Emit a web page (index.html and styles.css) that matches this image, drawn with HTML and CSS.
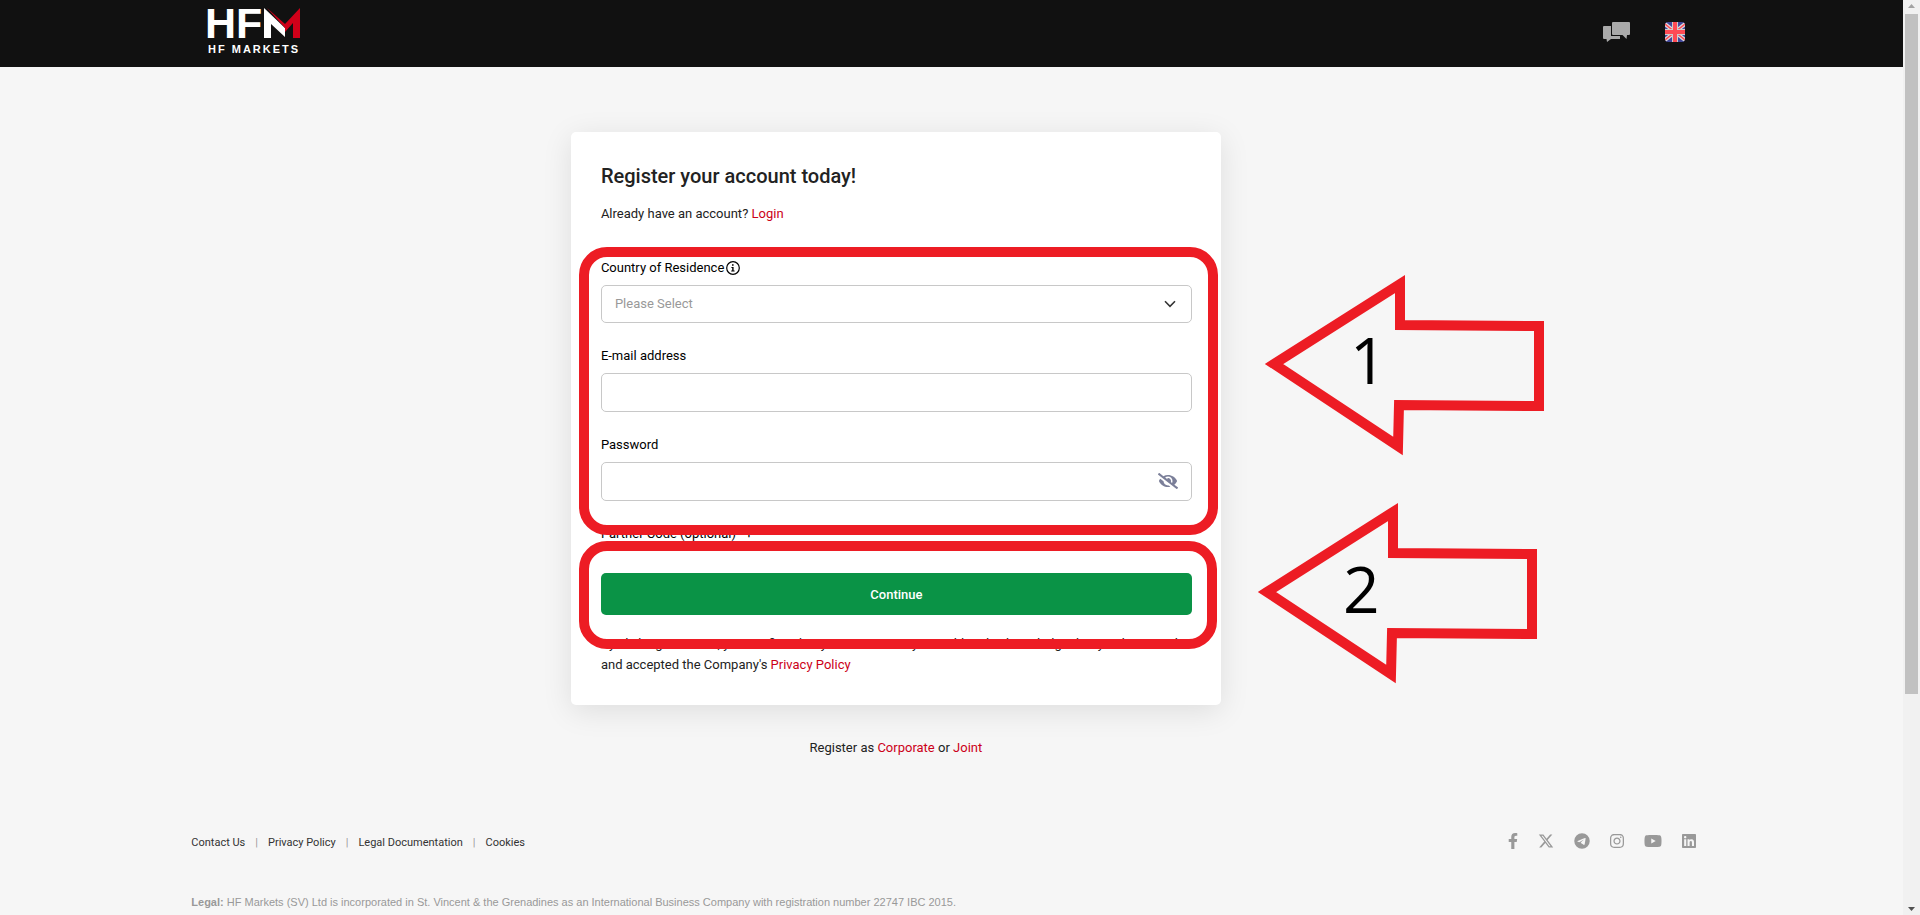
FILE: index.html
```html
<!DOCTYPE html>
<html lang="en">
<head>
  <meta charset="utf-8">
  <title>HFM - Register your account</title>
  <link rel="stylesheet" href="styles.css">
</head>
<body>
  <div class="page">
    <header class="header">
      <div class="container header-row">
        <a href="#" class="logo" aria-label="HFM">
          <svg width="100" height="50" viewBox="0 0 100 50">
            <text class="logo-name" x="14" y="35">HF</text>
            <path fill="#fff" d="M73 5l21 20v9L80 21v14h-7z"/>
            <path fill="#d00019" d="M76 5l18 16 15-16v30h-7V20l-8 9v-4z"/>
            <text class="logo-sub" x="17" y="50">HF MARKETS</text>
          </svg>
        </a>
        <div class="header-tools">
          <button type="button" class="tool" aria-label="Live chat">
            <svg width="28" height="20" viewBox="0 0 28 20">
              <path fill="#aaa" d="M1 4h7v10h9v3H8l-4 3-.5-3H1q-1 0-1-1V5q0-1 1-1z"/>
              <path fill="#aaa" d="M10 0h16q1 0 1 1v11q0 1-1 1h-2l-.5 4-4-4H10q-1 0-1-1V1q0-1 1-1z"/>
            </svg>
          </button>
          <button type="button" class="tool" aria-label="English">
            <svg class="flag" width="20" height="20" viewBox="0 0 20 20">
              <path fill="#41479b" d="M0 0h20v20H0z"/>
              <path stroke="#ddd" stroke-width="4" d="M0 2l20 16M0 18L20 2"/>
              <path stroke="#ff4b55" stroke-width="1.5" d="M0 2l20 16M0 18L20 2"/>
              <path stroke="#ccc" stroke-width="6" d="M10 0v20M0 10h20"/>
              <path stroke="#ff4b55" stroke-width="4" d="M10 0v20M0 10h20"/>
            </svg>
          </button>
        </div>
      </div>
    </header>

    <main class="main">
      <form class="card">
        <h1>Register your account today!</h1>
        <p class="login">Already have an account? <a href="#">Login</a></p>

        <div class="step step-fields">
          <div class="field">
            <label for="country">Country of Residence
              <svg class="info" width="14" height="14" viewBox="0 0 14 14">
                <circle cx="7" cy="7" r="6.3" fill="none" stroke="#000" stroke-width="1.2"/>
                <path fill="#000" d="M6 3.200h1.600v1.500H6zM5.400 6h2.200v3.500h1v1H5.200v-1h1V7h-.8z"/>
              </svg>
            </label>
            <div class="control">
              <select id="country">
                <option>Please Select</option>
              </select>
              <svg class="chevron" width="12" height="8" viewBox="0 0 12 8">
                <path fill="none" stroke="#333" stroke-width="1.600" d="M1 1.300l5 5 5-5"/>
              </svg>
            </div>
          </div>
          <div class="field">
            <label for="email">E-mail address</label>
            <input type="email" id="email">
          </div>
          <div class="field">
            <label for="password">Password</label>
            <div class="control">
              <input type="password" id="password">
              <button type="button" class="eye" aria-label="Show password">
                <svg width="20" height="16" viewBox="0 0 640 512">
                  <path fill="#7b7f99" d="M320 400c-75.900 0-137.300-58.700-142.900-133.100L72.200 185.800c-13.800 17.300-26.500 35.600-36.700 55.600a32.400 32.400 0 0 0 0 29.200C89.700 376.400 197.100 448 320 448c26.900 0 52.900-4 77.900-10.500L346 397.400a144.100 144.100 0 0 1-26 2.600zm313.800 58.100L523.300 372.700a331.300 331.300 0 0 0 81.200-102.100 32.400 32.400 0 0 0 0-29.200C550.300 135.600 442.900 64 320 64a308.200 308.200 0 0 0-147.300 37.700L45.500 3.400A16 16 0 0 0 23 6.200L3.400 31.500A16 16 0 0 0 6.200 53.900l588.400 454.700a16 16 0 0 0 22.500-2.800l19.600-25.300a16 16 0 0 0-2.900-22.400zM450.200 316.300L410.900 286a94.800 94.800 0 0 0-116.300-121.900A47.700 47.700 0 0 1 304 192a46.600 46.600 0 0 1-1.500 10l-73.700-57A142.300 142.300 0 0 1 320 112a143.900 143.900 0 0 1 144 144c0 21.600-5.300 41.800-13.800 60.300z"/>
                </svg>
              </button>
            </div>
          </div>
          <div class="outline"></div>
          <div class="arrow">
            <svg width="290" height="190" viewBox="0 0 290 190">
              <path d="M14 94L140 14v41l139 1v80l-140-1-1 41z"/>
              <text x="90" y="114">1</text>
            </svg>
          </div>
        </div>

        <p class="partner">Partner Code (optional) <span class="plus">+</span></p>

        <div class="step step-submit">
          <button type="submit" class="submit">Continue</button>
          <div class="outline"></div>
          <div class="arrow">
            <svg width="290" height="190" viewBox="0 0 290 190">
              <path d="M14 94L140 14v41l139 1v80l-140-1-1 41z"/>
              <text x="90" y="115">2</text>
            </svg>
          </div>
        </div>

        <p class="terms">By clicking Continue, you confirm that you are over 18 years old and acknowledge that you have read and accepted the Company's <a href="#">Privacy Policy</a></p>
      </form>
      <p class="other">Register as <a href="#">Corporate</a> or <a href="#">Joint</a></p>
    </main>

    <footer class="container footer">
      <div class="footer-row">
        <nav class="links">
          <a href="#">Contact Us</a>
          <a href="#">Privacy Policy</a>
          <a href="#">Legal Documentation</a>
          <a href="#">Cookies</a>
        </nav>
        <div class="social">
          <a href="#" aria-label="Facebook"><svg width="10" height="16" viewBox="0 0 320 512"><path d="M279.100 288l14.200-92.700h-88.900v-60.100c0-25.300 12.400-50.100 52.200-50.100h40.400V6.300S260.400 0 225.400 0c-73.200 0-121.100 44.400-121.100 124.700v70.600H22.900V288h81.400v224h100.200V288z"/></svg></a>
          <a href="#" aria-label="X"><svg width="16" height="16" viewBox="0 0 512 512"><path d="M389.200 48h70.600L305.600 224.200 487 464H345L233.700 318.600 106.500 464H35.800L200.700 275.500 26.800 48h145.600l100.500 132.900zm-24.800 373.800h39.100L151.100 88h-42z"/></svg></a>
          <a href="#" aria-label="Telegram"><svg width="16" height="16" viewBox="0 0 496 512"><path d="M248 8a248 248 0 1 0 0 496 248 248 0 1 0 0-496zm115 168.700c-3.700 39.200-19.900 134.400-28.100 178.300-3.500 18.600-10.300 24.800-16.900 25.400-14.400 1.300-25.300-9.500-39.300-18.700-21.800-14.300-34.200-23.200-55.300-37.200-24.500-16.100-8.600-25 5.300-39.500 3.700-3.800 67.100-61.500 68.300-66.700.2-.7.300-3.100-1.200-4.400s-3.600-.8-5.100-.5q-3.300.7-104.600 69.100-14.800 10.200-26.900 9.900c-8.900-.2-25.900-5-38.600-9.100-15.500-5-27.900-7.700-26.800-16.300q.8-6.700 18.500-13.700 108.400-47.200 144.600-62.300c68.900-28.600 83.200-33.600 92.500-33.800 2.100 0 6.600.5 9.600 2.900a10.500 10.500 0 0 1 3.500 6.700 43.800 43.800 0 0 1 .5 9.900z"/></svg></a>
          <a href="#" aria-label="Instagram"><svg width="14" height="16" viewBox="0 0 448 512"><path d="M224.100 141c-63.600 0-114.900 51.300-114.900 114.900s51.300 114.900 114.900 114.900S339 319.500 339 255.900 287.700 141 224.100 141zm0 189.600c-41.100 0-74.700-33.500-74.700-74.700s33.500-74.700 74.700-74.700 74.700 33.500 74.700 74.700-33.600 74.700-74.700 74.700zm146.400-194.300c0 14.900-12 26.800-26.800 26.800-14.900 0-26.800-12-26.800-26.800s12-26.800 26.800-26.800 26.800 12 26.800 26.800zm76.100 27.200c-1.700-35.900-9.900-67.700-36.200-93.900-26.200-26.200-58-34.400-93.900-36.200-37-2.100-147.900-2.100-184.900 0-35.800 1.700-67.600 9.900-93.900 36.100s-34.400 58-36.200 93.900c-2.100 37-2.100 147.900 0 184.900 1.700 35.900 9.900 67.700 36.200 93.900s58 34.400 93.900 36.200c37 2.100 147.900 2.100 184.900 0 35.900-1.700 67.700-9.900 93.900-36.200 26.200-26.200 34.400-58 36.200-93.900 2.100-37 2.100-147.800 0-184.800zM398.800 388c-7.800 19.600-22.900 34.700-42.600 42.600-29.500 11.700-99.500 9-132.100 9s-102.700 2.600-132.100-9c-19.600-7.800-34.700-22.900-42.600-42.600-11.700-29.500-9-99.500-9-132.100s-2.600-102.700 9-132.100c7.800-19.600 22.900-34.700 42.600-42.600 29.500-11.700 99.500-9 132.100-9s102.700-2.600 132.100 9c19.600 7.800 34.700 22.900 42.600 42.600 11.700 29.500 9 99.500 9 132.100s2.700 102.700-9 132.100z"/></svg></a>
          <a href="#" aria-label="YouTube"><svg width="18" height="16" viewBox="0 0 576 512"><path d="M549.700 124.100c-6.300-23.700-24.800-42.300-48.300-48.600C458.800 64 288 64 288 64S117.200 64 74.600 75.500c-23.500 6.300-42 24.900-48.300 48.600-11.400 42.900-11.400 132.300-11.400 132.300s0 89.400 11.400 132.300c6.300 23.700 24.800 41.500 48.300 47.800C117.200 448 288 448 288 448s170.800 0 213.400-11.500c23.500-6.300 42-24.200 48.300-47.800 11.400-42.900 11.400-132.300 11.400-132.300s0-89.400-11.400-132.300zM232.200 337.600V175.200l142.700 81.200z"/></svg></a>
          <a href="#" aria-label="LinkedIn"><svg width="14" height="16" viewBox="0 0 448 512"><path d="M416 32H31.900C14.300 32 0 46.500 0 64.300v383.400C0 465.500 14.300 480 31.900 480H416c17.600 0 32-14.500 32-32.300V64.300c0-17.800-14.400-32.300-32-32.300zM135.400 416H69V202.200h66.500V416zm-33.200-243c-21.300 0-38.500-17.300-38.500-38.500S80.900 96 102.200 96c21.200 0 38.500 17.300 38.500 38.500 0 21.300-17.200 38.500-38.500 38.500zm282.100 243h-66.400V312c0-24.800-.5-56.700-34.500-56.700-34.600 0-39.900 27-39.900 54.900V416h-66.400V202.200h63.700v29.200h.9c8.900-16.800 30.600-34.500 62.900-34.500 67.200 0 79.700 44.300 79.700 101.900V416z"/></svg></a>
        </div>
      </div>
      <p class="legal"><b>Legal:</b> HF Markets (SV) Ltd is incorporated in St. Vincent &amp; the Grenadines as an International Business Company with registration number 22747 IBC 2015.</p>
    </footer>
  </div>

  <div class="scrollbar">
    <svg width="7" height="4" viewBox="0 0 7 4"><path fill="#a3a3a3" d="M0 4l3.500-4L7 4z"/></svg>
    <div class="thumb"></div>
    <svg width="7" height="4" viewBox="0 0 7 4"><path fill="#505050" d="M0 0l3.500 4L7 0z"/></svg>
  </div>
</body>
</html>
```

FILE: styles.css
```css
* {
  box-sizing: border-box;
}
body {
  margin: 0;
  display: flex;
  height: 100vh;
  overflow: hidden;
  background-color: #f6f6f6;
  color: #222;
  font-family: Roboto, Arial, sans-serif;
  font-size: 13px;
  line-height: 21px;
}
h1, p {
  margin: 0;
}
a {
  color: #cc0018;
  text-decoration: none;
}
button {
  font: inherit;
  border: none;
  cursor: pointer;
}
svg {
  display: block;
}
.page {
  flex: 1;
  min-width: 0;
}
.container {
  width: 80%;
  margin: 0 auto;
  padding: 0 17px 0 1px;
}

/* header */
.header {
  background-color: #111;
}
.header-row {
  display: flex;
  justify-content: space-between;
  height: 67px;
}
.logo {
  padding-top: 3px;
}
.logo svg {
  overflow: visible;
}
.logo-name, .logo-sub {
  fill: #fff;
  font-family: "Liberation Sans", Arial, sans-serif;
  font-weight: bold;
}
.logo-name {
  font-size: 43px;
}
.logo-sub {
  font-size: 11px;
  letter-spacing: 2px;
}
.header-tools {
  display: flex;
  align-items: center;
  gap: 34px;
  padding: 0 11px 4px 0;
}
.tool {
  padding: 0;
  background: none;
}
.flag {
  border-radius: 3px;
}

/* registration card */
.main {
  width: 650px;
  margin-left: 30%;
  padding-top: 65px;
}
.card {
  padding: 30px 29px 30px 30px;
  background-color: #fff;
  border-radius: 5px;
  box-shadow: 0 6px 30px rgba(0, 0, 0, 0.1);
}
h1 {
  font-size: 20px;
  font-weight: 500;
  line-height: 28px;
}
.login {
  margin: 13px 0 33px;
}
.step {
  position: relative;
}
.field {
  margin-bottom: 22px;
}
label {
  display: flex;
  align-items: center;
  gap: 2px;
  margin-bottom: 7px;
  color: #000;
}
.control {
  position: relative;
}
select, input {
  display: block;
  width: 100%;
  height: 39px;
  padding: 0 13px;
  border: 1px solid #c8c8c8;
  border-radius: 5px;
  background-color: #fff;
  font: inherit;
}
select {
  height: 38px;
  padding-bottom: 2px;
  appearance: none;
  color: #999;
}
.chevron {
  position: absolute;
  right: 16px;
  top: 15px;
  pointer-events: none;
}
.eye {
  position: absolute;
  right: 14px;
  top: 11px;
  padding: 0;
  background: none;
}
.partner {
  color: #000;
}
.plus {
  margin-left: 6px;
}
.submit {
  width: 100%;
  height: 42px;
  margin: 29px 0 18px;
  border-radius: 5px;
  background-color: #0a9346;
  color: #fff;
  font-weight: 500;
}
.submit:hover {
  background-color: #087c3b;
}
.other {
  margin-top: 32px;
  text-align: center;
}

/* red step markers drawn over the form */
.outline {
  position: absolute;
  inset: -10px -26px -34px -22px;
  border: 10px solid #ed1c24;
  border-radius: 28px;
  pointer-events: none;
}
.arrow {
  position: absolute;
  left: 100%;
  top: 13px;
  margin-left: 68px;
}
.step-submit .outline {
  inset: -3px -25px -16px -22px;
}
.step-submit .arrow {
  top: -46px;
  margin-left: 61px;
}
.arrow path {
  fill: none;
  stroke: #ed1c24;
  stroke-width: 10;
}
.arrow text {
  font-family: "Open Sans", sans-serif;
  font-size: 64px;
}

/* footer */
.footer {
  padding-top: 72px;
}
.footer-row {
  display: flex;
  justify-content: space-between;
  align-items: flex-start;
}
.links {
  display: flex;
  align-items: center;
  padding-top: 2px;
  font-size: 11px;
}
.links a {
  color: #333;
}
.links a + a::before {
  content: "|";
  margin: 0 10px;
  color: #999;
}
.social {
  display: flex;
  gap: 20px;
  padding-top: 3px;
}
.social svg {
  fill: #999;
}
.legal {
  margin-top: 39px;
  color: #999;
  font-family: "Liberation Sans", Arial, sans-serif;
  font-size: 11px;
}

/* scrollbar */
.scrollbar {
  display: flex;
  flex-direction: column;
  align-items: center;
  width: 17px;
  padding: 4px 0;
  background-color: #f1f1f1;
}
.thumb {
  width: 13px;
  height: 75%;
  margin: 6px 0 auto;
  background-color: #c1c1c1;
}
```
